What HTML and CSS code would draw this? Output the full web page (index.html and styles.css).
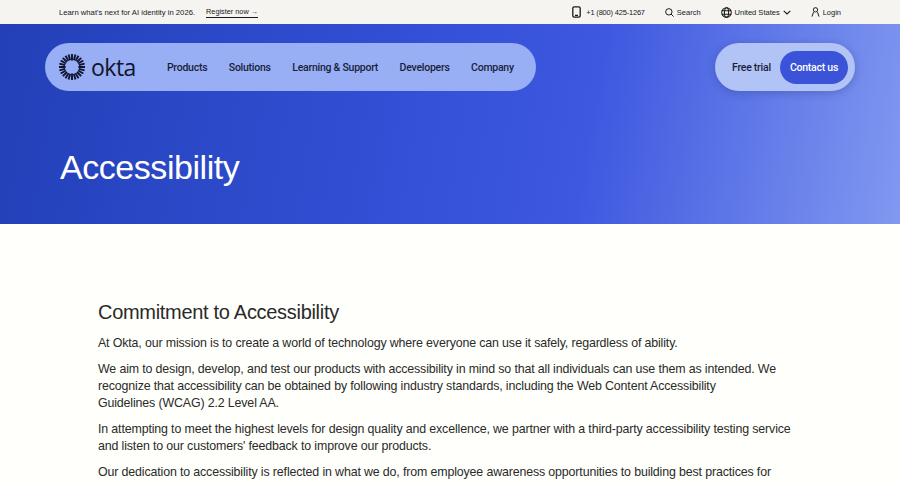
FILE: index.html
```html
<!DOCTYPE html>
<html lang="en">
<head>
    <meta charset="UTF-8">
    <meta name="viewport" content="width=device-width, initial-scale=1.0">
    <title>Accessibility</title>
    <link rel="stylesheet" href="styles.css">
</head>
<body>

<div class="topbar">
    <div class="promo">
        <span>Learn what's next for AI identity in 2026.</span>
        <a href="#" class="promo-link">Register now →</a>
    </div>
    <div class="utility">
        <a href="#" class="utility-item phone">
            <svg width="9" height="12" viewBox="0 0 9 12" fill="none" stroke="#191919" stroke-width="1.3"><rect x=".8" y=".8" width="7.4" height="10.4" rx="1.4"/><path d="M3 9.4h3"/></svg>
            +1 (800) 425-1267
        </a>
        <a href="#" class="utility-item search">
            <svg width="9" height="9" viewBox="0 0 11 11" fill="none" stroke="#191919" stroke-width="1.2"><circle cx="4.7" cy="4.7" r="3.9"/><path d="M7.4 7.4L10.5 10.5"/></svg>
            Search
        </a>
        <a href="#" class="utility-item country">
            <svg width="11" height="11" viewBox="0 0 12 12" fill="none" stroke="#191919" stroke-width="1.1"><circle cx="6" cy="6" r="5.2"/><ellipse cx="6" cy="6" rx="2.3" ry="5.2"/><path d="M.8 4.2h10.4M.8 7.8h10.4"/></svg>
            United States
            <svg class="chevron" width="8" height="5" viewBox="0 0 8 5" fill="none" stroke="#191919" stroke-width="1.1"><path d="M.7.8L4 4l3.3-3.2"/></svg>
        </a>
        <a href="#" class="utility-item login">
            <svg width="9" height="10" viewBox="0 0 10 12" fill="none" stroke="#191919" stroke-width="1.2"><circle cx="5" cy="3.4" r="2.6"/><path d="M.8 11.5L2.6 6.2M9.2 11.5L7.4 6.2"/></svg>
            Login
        </a>
    </div>
</div>

<header class="hero">
    <div class="nav-row">
        <nav class="main-nav">
            <a href="#" class="logo">
                <svg class="logo-mark" width="26" height="26" viewBox="0 0 26 26" fill="none" stroke="#0f1330" stroke-width="1.9">
                    <path d="M13 0V6.6M13 19.4V26M0 13H6.6M19.4 13H26"/>
                    <path d="M16.4 .4L14.9 6.2M9.6 25.6L11.1 19.8M25.6 16.4L19.8 14.9M.4 9.6L6.2 11.1"/>
                    <path d="M19.5 1.7L16.5 6.9M6.5 24.3L9.5 19.1M24.3 19.5L19.1 16.5M1.7 6.5L6.9 9.5"/>
                    <path d="M22.2 3.8L18 8M3.8 22.2L8 18M22.2 22.2L18 18M3.8 3.8L8 8"/>
                    <path d="M24.3 6.5L19.1 9.5M1.7 19.5L6.9 16.5M19.5 24.3L16.5 19.1M6.5 1.7L9.5 6.9"/>
                    <path d="M25.6 9.6L19.8 11.1M.4 16.4L6.2 14.9M16.4 25.6L14.9 19.8M9.6 .4L11.1 6.2"/>
                </svg>
                <span class="logo-word">okta</span>
            </a>
            <ul class="nav-links">
                <li><a href="#">Products</a></li>
                <li><a href="#">Solutions</a></li>
                <li><a href="#">Learning &amp; Support</a></li>
                <li><a href="#">Developers</a></li>
                <li><a href="#">Company</a></li>
            </ul>
        </nav>
        <div class="cta-nav">
            <a href="#" class="free-trial">Free trial</a>
            <a href="#" class="contact-btn">Contact us</a>
        </div>
    </div>
    <h1>Accessibility</h1>
</header>

<main class="content">
    <h2>Commitment to Accessibility</h2>
    <p>At Okta, our mission is to create a world of technology where everyone can use it safely, regardless of ability.</p>
    <p>We aim to design, develop, and test our products with accessibility in mind so that all individuals can use them as intended. We recognize that accessibility can be obtained by following industry standards, including the Web Content Accessibility Guidelines&nbsp;(WCAG) 2.2 Level AA.</p>
    <p>In attempting to meet the highest levels for design quality and excellence, we partner with a third-party accessibility testing service and listen to our customers' feedback to improve our products.</p>
    <p>Our dedication to accessibility is reflected in what we do, from employee awareness opportunities to building best practices for accessible product development. We offer public Accessibility Compliance Reports (ACRs) and host in-person and virtual</p>
</main>

</body>
</html>
```

FILE: styles.css
```css
html, body {
    height: 484px;
    overflow: hidden;
}
body {
    font-family: "Liberation Sans", Arial, sans-serif;
    background-color: #fffffb;
    color: #191919;
    margin: 0;
}
a {
    color: inherit;
    text-decoration: none;
}

.topbar {
    height: 24px;
    background-color: #f5f4f1;
    display: flex;
    justify-content: space-between;
    align-items: center;
    padding: 0 59px;
    font-size: 7.5px;
}
.promo {
    display: flex;
    align-items: center;
    gap: 11px;
    font-size: 7.7px;
}
.promo-link {
    border-bottom: 1px solid #191919;
    padding-bottom: 1px;
    font-size: 7.3px;
}
.utility {
    display: flex;
    align-items: center;
}
.utility-item {
    display: flex;
    align-items: center;
    gap: 3px;
}
.phone {
    gap: 5px;
    letter-spacing: -0.2px;
    margin-right: 20px;
}
.search {
    margin-right: 20px;
}
.country {
    margin-right: 20px;
}

.hero {
    height: 200px;
    box-sizing: border-box;
    padding: 19px 45px 0;
    background: linear-gradient(100deg, #2340b8 0%, #3350d6 45%, #3e58e0 65%, #8199f0 100%);
}
.nav-row {
    display: flex;
    justify-content: space-between;
    align-items: center;
}
.main-nav {
    width: 491px;
    height: 48px;
    box-sizing: border-box;
    padding: 0 14px;
    background-color: #98aef5;
    border-radius: 24px;
    display: flex;
    align-items: center;
    color: #1a1e3a;
}
.logo {
    display: flex;
    align-items: center;
    gap: 6px;
    margin-right: 31px;
}
.logo-word {
    font-family: "Open Sans", sans-serif;
    font-size: 23px;
    font-weight: 500;
    letter-spacing: -0.5px;
    line-height: 1;
    color: #10142e;
}
.nav-links {
    display: flex;
    gap: 21.5px;
    list-style: none;
    margin: 0;
    padding: 0;
    font-family: Roboto, sans-serif;
    font-size: 10.5px;
    font-weight: 500;
    letter-spacing: -0.25px;
    white-space: nowrap;
}
.cta-nav {
    width: 140px;
    height: 48px;
    box-sizing: border-box;
    padding: 0 7px 0 17px;
    background-color: #b2c4f6;
    border-radius: 24px;
    display: flex;
    align-items: center;
    justify-content: space-between;
    font-family: Roboto, sans-serif;
    font-size: 10.5px;
    font-weight: 500;
    letter-spacing: -0.25px;
    color: #1a1e3a;
    box-shadow: 0 2px 8px rgba(20, 30, 90, 0.25);
}
.contact-btn {
    background-color: #3a53d8;
    color: #fff;
    height: 33px;
    width: 68px;
    border-radius: 17px;
    display: flex;
    align-items: center;
    justify-content: center;
}
h1 {
    margin: 56px 0 0 15px;
    color: #fff;
    font-size: 34px;
    font-weight: 400;
    letter-spacing: -0.45px;
    line-height: 40px;
}

.content {
    max-width: 704px;
    margin-left: 98px;
    padding-top: 75px;
    font-size: 12.4px;
    letter-spacing: -0.14px;
    line-height: 17px;
    color: #2a2a2a;
}
.content h2 {
    margin: 0 0 10px;
    font-size: 20px;
    font-weight: 400;
    letter-spacing: -0.3px;
    line-height: 26px;
}
.content p {
    margin: 0 0 9px;
}
```
